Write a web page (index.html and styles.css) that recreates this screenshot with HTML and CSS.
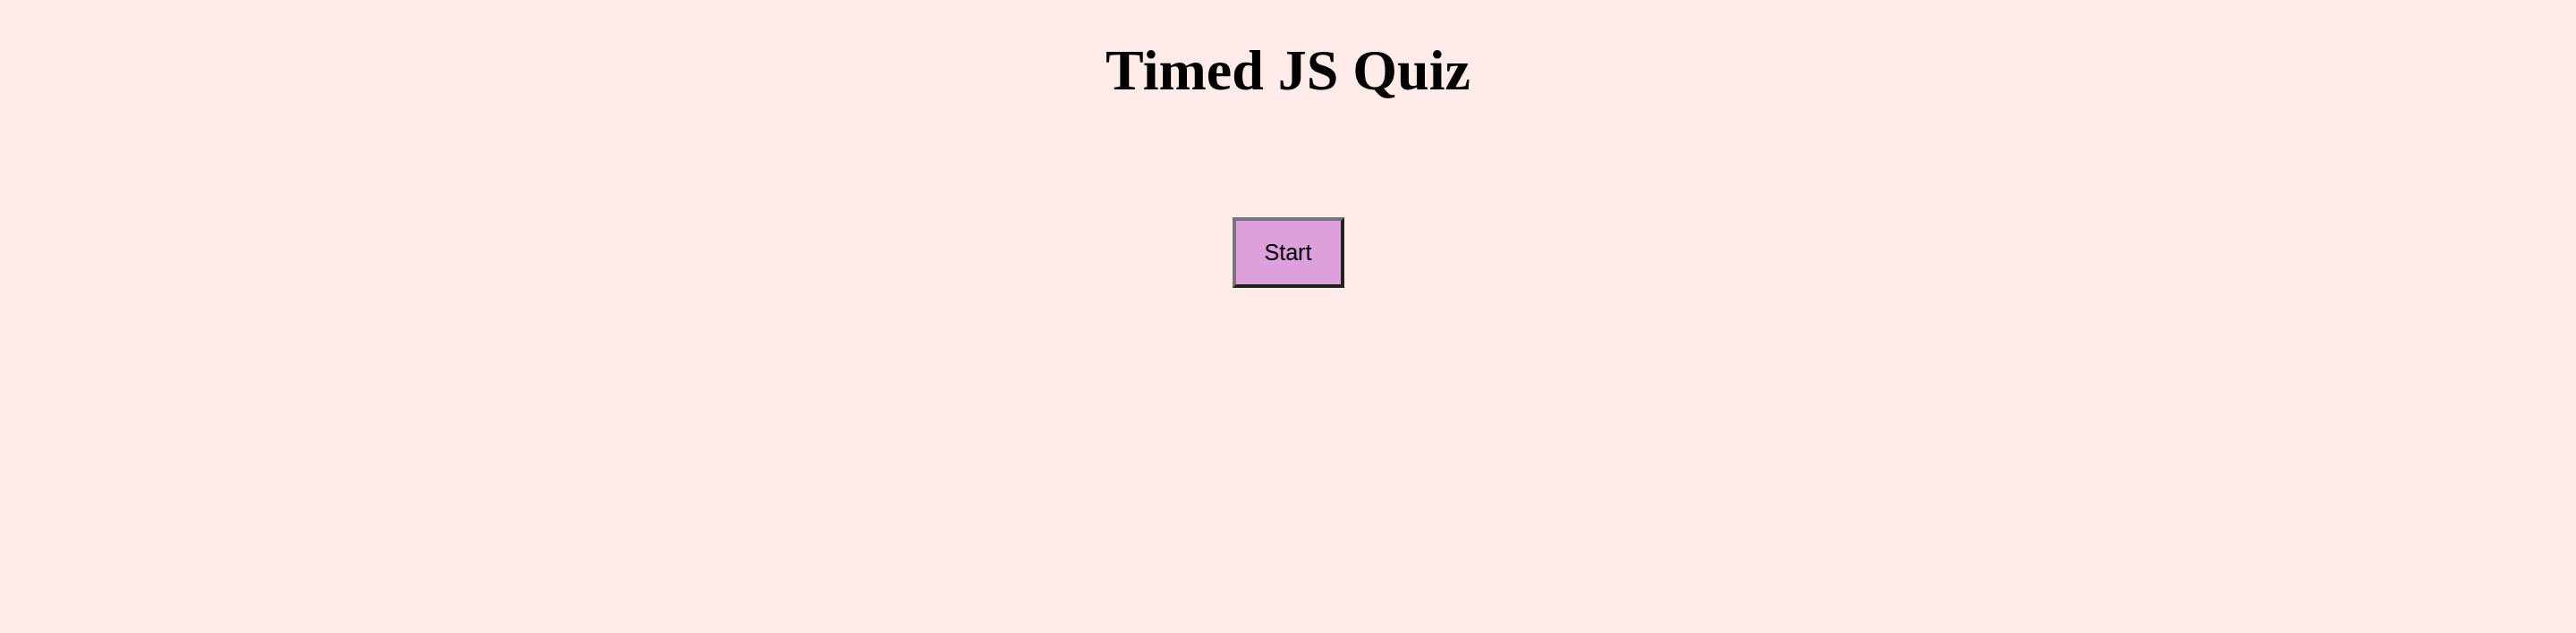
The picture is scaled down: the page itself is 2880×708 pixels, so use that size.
FILE: index.html
```html
<!DOCTYPE html>
<html lang="en">
<head>
<meta charset="utf-8">
<title>Timed JS Quiz</title>
<link rel="stylesheet" href="styles.css">
</head>
<body>
<header class="header">
  <h1 class="title">Timed JS Quiz</h1>
</header>
<main class="main">
  <button class="start-btn" type="button">Start</button>
</main>
</body>
</html>
```

FILE: styles.css
```css
html, body {
  margin: 0;
  padding: 0;
}
body {
  background: #ffebe8;
  font-family: "Liberation Serif", "Times New Roman", serif;
  min-height: 708px;
}
.header {
  display: flex;
  justify-content: center;
  padding-top: 42px;
}
.title {
  margin: 0;
  font-size: 64px;
  font-weight: bold;
  line-height: 74px;
  color: #000;
}
.main {
  display: flex;
  justify-content: center;
  padding-top: 127px;
}
.start-btn {
  box-sizing: border-box;
  width: 125px;
  height: 79px;
  background: #dda0dd;
  border-style: solid;
  border-width: 4px;
  border-color: #767676 #222 #222 #767676;
  font-family: "Liberation Sans", Arial, sans-serif;
  font-size: 25px;
  color: #000;
  padding: 0;
  margin: 0;
}
```
